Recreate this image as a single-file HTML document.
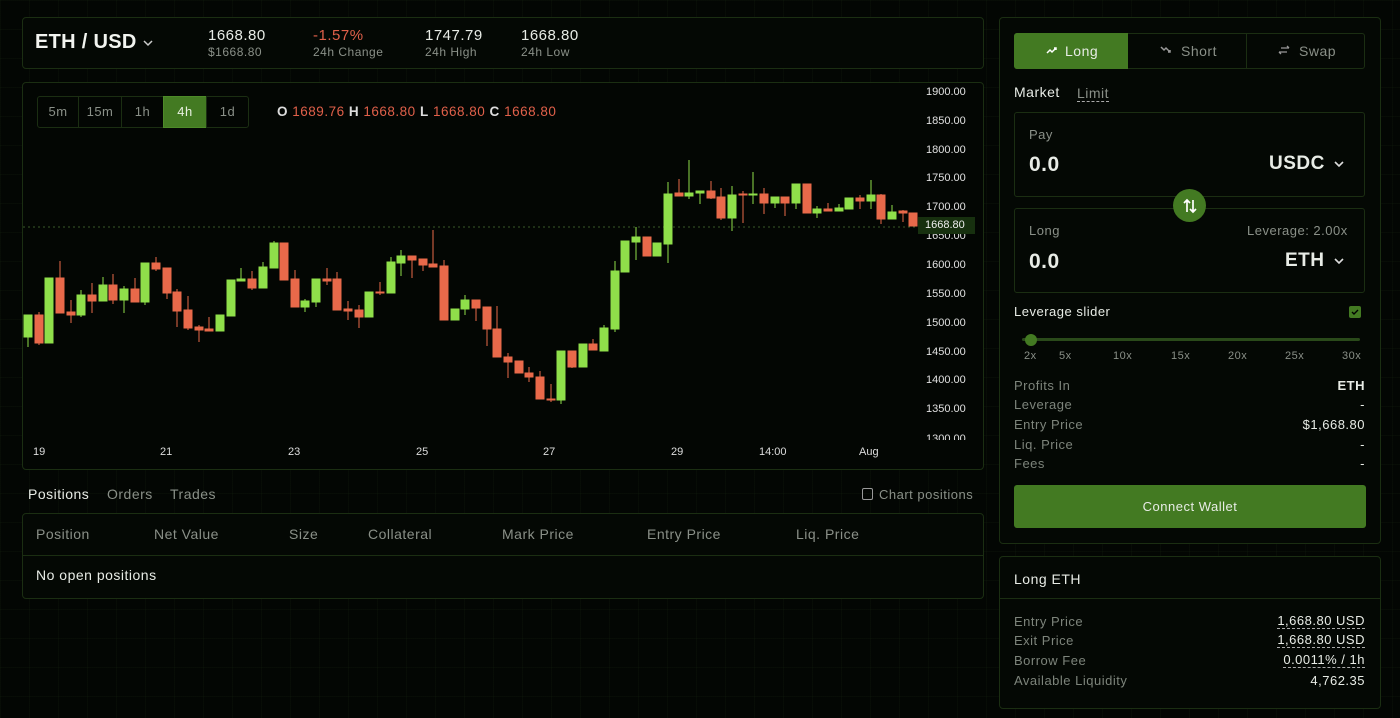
<!DOCTYPE html>
<html><head><meta charset="utf-8"><style>
*{box-sizing:border-box;margin:0;padding:0}
body{width:1400px;height:718px;overflow:hidden;position:relative;font-family:"Liberation Sans",sans-serif;color:#e8ece6;letter-spacing:.5px;
background-color:#030603;
background-image:linear-gradient(rgba(40,70,30,.11) 1px,transparent 1px),linear-gradient(90deg,rgba(40,70,30,.11) 1px,transparent 1px);
background-size:29px 29px;}
.p{position:absolute;border:1px solid #1b2e12;border-radius:4px;background:#040804}
.a{position:absolute;white-space:nowrap}
.g{color:#8a9088}
.r{color:#e0604a}
.tf{position:absolute;top:96px;height:32px;border:1px solid #1b2e12;color:#8a9088;font-size:13px;line-height:30px;text-align:center}
.row{position:absolute;left:1014px;width:351px;font-size:13px;display:flex;justify-content:space-between;color:#7d847b}
.row b{font-weight:normal;color:#e8ece6}
.u{border-bottom:1px dashed #aaa;line-height:14px}
</style></head><body>

<div class="p" style="left:22px;top:17px;width:962px;height:52px"></div>
<div class="a" style="left:35px;top:31px;font-size:20px;font-weight:bold;color:#f2f4f0;letter-spacing:.3px">ETH / USD</div>
<svg class="a" style="left:142px;top:38px" width="12" height="10"><path d="M2 3l4 4 4-4" stroke="#ccc" stroke-width="1.5" fill="none"/></svg>
<div class="a" style="left:208px;top:27px;font-size:15px">1668.80</div>
<div class="a g" style="left:208px;top:45px;font-size:12px">$1668.80</div>
<div class="a r" style="left:313px;top:27px;font-size:15px">-1.57%</div>
<div class="a g" style="left:313px;top:45px;font-size:12px">24h Change</div>
<div class="a" style="left:425px;top:27px;font-size:15px">1747.79</div>
<div class="a g" style="left:425px;top:45px;font-size:12px">24h High</div>
<div class="a" style="left:521px;top:27px;font-size:15px">1668.80</div>
<div class="a g" style="left:521px;top:45px;font-size:12px">24h Low</div>

<div class="p" style="left:22px;top:82px;width:962px;height:388px;background:#030603"></div>
<div class="tf" style="left:37px;width:42px;border-radius:3px 0 0 3px">5m</div>
<div class="tf" style="left:78px;width:44px">15m</div>
<div class="tf" style="left:121px;width:43px">1h</div>
<div class="tf" style="left:163px;width:44px;background:#437a22;color:#e8f0e0;border-color:#4d8a28">4h</div>
<div class="tf" style="left:206px;width:43px;border-radius:0 3px 3px 0">1d</div>
<div class="a" style="left:277px;top:104px;font-size:13.5px"><span style="color:#ddd;font-weight:bold">O</span> <span class="r">1689.76</span> <span style="color:#ddd;font-weight:bold">H</span> <span class="r">1668.80</span> <span style="color:#ddd;font-weight:bold">L</span> <span class="r">1668.80</span> <span style="color:#ddd;font-weight:bold">C</span> <span class="r">1668.80</span></div>

<div class="a" style="left:926px;top:84px;width:50px;height:356px;overflow:hidden;font-size:11px;color:#e0e0e0;letter-spacing:0">
<div style="position:absolute;top:2px">1900.00</div><div style="position:absolute;top:31px">1850.00</div><div style="position:absolute;top:60px">1800.00</div><div style="position:absolute;top:88px">1750.00</div><div style="position:absolute;top:117px">1700.00</div><div style="position:absolute;top:146px">1650.00</div><div style="position:absolute;top:175px">1600.00</div><div style="position:absolute;top:204px">1550.00</div><div style="position:absolute;top:233px">1500.00</div><div style="position:absolute;top:262px">1450.00</div><div style="position:absolute;top:290px">1400.00</div><div style="position:absolute;top:319px">1350.00</div><div style="position:absolute;top:349px">1300.00</div>
</div>
<div class="a" style="left:918px;top:217px;width:57px;height:17px;background:#17300f;font-size:11px;line-height:17px;color:#eee;padding-left:7px;letter-spacing:0">1668.80</div>
<div class="a" style="left:0;top:446px;font-size:11px;color:#ddd;width:1000px;height:14px;letter-spacing:0">
<span class="a" style="left:33px">19</span><span class="a" style="left:160px">21</span><span class="a" style="left:288px">23</span><span class="a" style="left:416px">25</span><span class="a" style="left:543px">27</span><span class="a" style="left:671px">29</span><span class="a" style="left:759px">14:00</span><span class="a" style="left:859px">Aug</span></div>

<svg class="a" style="left:0;top:0" width="1000" height="470">
<line x1="23" y1="227" x2="918" y2="227" stroke="#3a5a2a" stroke-dasharray="2 3"/>
</svg>

<div class="a" style="left:28px;top:486px;font-size:14px;color:#e8ece6">Positions</div>
<div class="a g" style="left:107px;top:486px;font-size:14px">Orders</div>
<div class="a g" style="left:170px;top:486px;font-size:14px">Trades</div>
<div class="a" style="left:862px;top:488px;width:11px;height:12px;border:1px solid #999;border-radius:2px"></div>
<div class="a g" style="left:879px;top:487px;font-size:13px">Chart positions</div>
<div class="p" style="left:22px;top:513px;width:962px;height:86px"></div>
<div class="a" style="left:22px;top:555px;width:962px;height:1px;background:#1b2e12"></div>
<div class="a g" style="left:36px;top:526px;font-size:14px;width:900px;height:18px">
<span class="a" style="left:0">Position</span><span class="a" style="left:118px">Net Value</span><span class="a" style="left:253px">Size</span><span class="a" style="left:332px">Collateral</span><span class="a" style="left:466px">Mark Price</span><span class="a" style="left:611px">Entry Price</span><span class="a" style="left:760px">Liq. Price</span></div>
<div class="a" style="left:36px;top:567px;font-size:14px">No open positions</div>

<div class="p" style="left:999px;top:17px;width:382px;height:527px"></div>
<div class="a" style="left:1014px;top:33px;width:351px;height:36px;border:1px solid #1b2e12;border-radius:3px"></div>
<div class="a" style="left:1014px;top:33px;width:114px;height:36px;background:#437a22;border-radius:3px 0 0 3px"></div>
<div class="a" style="left:1246px;top:33px;width:1px;height:36px;background:#1b2e12"></div>
<svg class="a" style="left:1046px;top:45px" width="12" height="10"><path d="M1 8l3-3 2 2 4-4M8 3h2v2" stroke="#fff" stroke-width="1.5" fill="none"/></svg>
<div class="a" style="left:1065px;top:43px;font-size:14px">Long</div>
<svg class="a" style="left:1160px;top:45px" width="12" height="10"><path d="M1 2l3 3 2-2 4 4M8 7h2v-2" stroke="#999" stroke-width="1.5" fill="none"/></svg>
<div class="a g" style="left:1181px;top:43px;font-size:14px">Short</div>
<svg class="a" style="left:1278px;top:45px" width="12" height="10"><path d="M3 3h8M9 1l2 2M9 7H1M3 9L1 7" stroke="#999" stroke-width="1.3" fill="none"/></svg>
<div class="a g" style="left:1299px;top:43px;font-size:14px">Swap</div>

<div class="a" style="left:1014px;top:84px;font-size:14px">Market</div>
<div class="a g u" style="left:1077px;top:85px;font-size:14px;line-height:16px">Limit</div>

<div class="a" style="left:1014px;top:112px;width:351px;height:85px;border:1px solid #1b2e12;border-radius:3px"></div>
<div class="a g" style="left:1029px;top:127px;font-size:13px">Pay</div>
<div class="a" style="left:1029px;top:153px;font-size:21px;font-weight:bold">0.0</div>
<div class="a" style="left:1269px;top:153px;font-size:19px;font-weight:bold">USDC</div>
<svg class="a" style="left:1333px;top:159px" width="12" height="10"><path d="M2 3l4 4 4-4" stroke="#ddd" stroke-width="1.6" fill="none"/></svg>

<div class="a" style="left:1014px;top:208px;width:351px;height:85px;border:1px solid #1b2e12;border-radius:3px"></div>
<div class="a g" style="left:1029px;top:223px;font-size:13px">Long</div>
<div class="a g" style="left:1247px;top:223px;font-size:13px">Leverage: 2.00x</div>
<div class="a" style="left:1029px;top:250px;font-size:21px;font-weight:bold">0.0</div>
<div class="a" style="left:1285px;top:250px;font-size:19px;font-weight:bold">ETH</div>
<svg class="a" style="left:1333px;top:256px" width="12" height="10"><path d="M2 3l4 4 4-4" stroke="#ddd" stroke-width="1.6" fill="none"/></svg>

<div class="a" style="left:1173px;top:189px;width:33px;height:33px;border-radius:50%;background:#437a22"></div>
<svg class="a" style="left:1181px;top:197px" width="18" height="18"><path d="M6 15V3M3 6l3-3 3 3M12 3v12M9 12l3 3 3-3" stroke="#fff" stroke-width="1.7" fill="none"/></svg>

<div class="a" style="left:1014px;top:304px;font-size:13px">Leverage slider</div>
<div class="a" style="left:1349px;top:306px;width:12px;height:12px;background:#437a22;border-radius:2px"></div>
<svg class="a" style="left:1349px;top:306px" width="12" height="12"><path d="M3 6l2 2 4-4" stroke="#000" stroke-width="1.4" fill="none"/></svg>
<div class="a" style="left:1022px;top:338px;width:338px;height:3px;background:#2a4a1a;border-radius:2px"></div>
<div class="a" style="left:1025px;top:334px;width:12px;height:12px;border-radius:50%;background:#437a22"></div>
<div class="a g" style="left:1014px;top:350px;font-size:11px;width:360px;height:14px">
<span class="a" style="left:10px">2x</span><span class="a" style="left:45px">5x</span><span class="a" style="left:99px">10x</span><span class="a" style="left:157px">15x</span><span class="a" style="left:214px">20x</span><span class="a" style="left:271px">25x</span><span class="a" style="left:328px">30x</span></div>

<div class="row" style="top:378px"><span>Profits In</span><b style="font-weight:bold">ETH</b></div>
<div class="row" style="top:397px"><span>Leverage</span><b>-</b></div>
<div class="row" style="top:417px"><span>Entry Price</span><b>$1,668.80</b></div>
<div class="row" style="top:437px"><span>Liq. Price</span><b>-</b></div>
<div class="row" style="top:456px"><span>Fees</span><b>-</b></div>
<div class="a" style="left:1014px;top:485px;width:352px;height:43px;background:#437a22;border-radius:3px;font-size:13px;text-align:center;line-height:43px">Connect Wallet</div>

<div class="p" style="left:999px;top:556px;width:382px;height:153px"></div>
<div class="a" style="left:999px;top:598px;width:382px;height:1px;background:#1b2e12"></div>
<div class="a" style="left:1014px;top:571px;font-size:14px">Long ETH</div>
<div class="row" style="top:614px"><span>Entry Price</span><b class="u">1,668.80 USD</b></div>
<div class="row" style="top:633px"><span>Exit Price</span><b class="u">1,668.80 USD</b></div>
<div class="row" style="top:653px"><span>Borrow Fee</span><b class="u">0.0011% / 1h</b></div>
<div class="row" style="top:673px"><span>Available Liquidity</span><b>4,762.35</b></div>

<svg class="a" style="left:0;top:0" width="1000" height="470">
<g stroke-width="1">
<g fill="#8fdf4a" stroke="#8fdf4a">
<line x1="28" y1="315" x2="28" y2="347"/><rect x="24" y="315" width="8" height="22"/>
<line x1="49" y1="278" x2="49" y2="343"/><rect x="45" y="278" width="8" height="65"/>
<line x1="81" y1="290" x2="81" y2="317"/><rect x="77" y="295" width="8" height="20"/>
<line x1="103" y1="277" x2="103" y2="301"/><rect x="99" y="285" width="8" height="16"/>
<line x1="124" y1="286" x2="124" y2="313"/><rect x="120" y="289" width="8" height="11"/>
<line x1="145" y1="263" x2="145" y2="305"/><rect x="141" y="263" width="8" height="39"/>
<rect x="216" y="315" width="8" height="16"/>
<rect x="227" y="280" width="8" height="36"/>
<line x1="241" y1="268" x2="241" y2="281"/><rect x="237" y="279" width="8" height="2"/>
<line x1="263" y1="262" x2="263" y2="288"/><rect x="259" y="267" width="8" height="21"/>
<line x1="274" y1="241" x2="274" y2="268"/><rect x="270" y="243" width="8" height="25"/>
<line x1="305" y1="299" x2="305" y2="312"/><rect x="301" y="301" width="8" height="6"/>
<line x1="316" y1="279" x2="316" y2="307"/><rect x="312" y="279" width="8" height="23"/>
<rect x="365" y="292" width="8" height="25"/>
<line x1="391" y1="257" x2="391" y2="293"/><rect x="387" y="262" width="8" height="31"/>
<line x1="401" y1="250" x2="401" y2="276"/><rect x="397" y="256" width="8" height="7"/>
<rect x="451" y="309" width="8" height="11"/>
<line x1="465" y1="295" x2="465" y2="315"/><rect x="461" y="300" width="8" height="9"/>
<line x1="561" y1="351" x2="561" y2="404"/><rect x="557" y="351" width="8" height="49"/>
<rect x="579" y="344" width="8" height="23"/>
<line x1="604" y1="325" x2="604" y2="351"/><rect x="600" y="328" width="8" height="23"/>
<line x1="615" y1="261" x2="615" y2="332"/><rect x="611" y="271" width="8" height="58"/>
<rect x="621" y="241" width="8" height="31"/>
<line x1="636" y1="227" x2="636" y2="260"/><rect x="632" y="237" width="8" height="5"/>
<rect x="653" y="243" width="8" height="13"/>
<line x1="668" y1="182" x2="668" y2="263"/><rect x="664" y="194" width="8" height="50"/>
<line x1="689" y1="160" x2="689" y2="199"/><rect x="685" y="193" width="8" height="3"/>
<line x1="700" y1="191" x2="700" y2="204"/><rect x="696" y="191" width="8" height="2"/>
<line x1="732" y1="186" x2="732" y2="231"/><rect x="728" y="195" width="8" height="23"/>
<line x1="753" y1="172" x2="753" y2="204"/><rect x="749" y="194" width="8" height="1"/>
<line x1="775" y1="197" x2="775" y2="208"/><rect x="771" y="197" width="8" height="6"/>
<line x1="796" y1="184" x2="796" y2="209"/><rect x="792" y="184" width="8" height="19"/>
<line x1="817" y1="206" x2="817" y2="218"/><rect x="813" y="209" width="8" height="4"/>
<line x1="839" y1="204" x2="839" y2="211"/><rect x="835" y="208" width="8" height="3"/>
<rect x="845" y="198" width="8" height="11"/>
<line x1="871" y1="180" x2="871" y2="209"/><rect x="867" y="195" width="8" height="6"/>
<line x1="892" y1="205" x2="892" y2="219"/><rect x="888" y="212" width="8" height="7"/>
</g>
<g fill="#e8694a" stroke="#e8694a">
<line x1="39" y1="312" x2="39" y2="345"/><rect x="35" y="315" width="8" height="28"/>
<line x1="60" y1="261" x2="60" y2="313"/><rect x="56" y="278" width="8" height="35"/>
<line x1="71" y1="300" x2="71" y2="323"/><rect x="67" y="312" width="8" height="3"/>
<line x1="92" y1="283" x2="92" y2="313"/><rect x="88" y="295" width="8" height="6"/>
<line x1="113" y1="274" x2="113" y2="304"/><rect x="109" y="285" width="8" height="15"/>
<line x1="135" y1="278" x2="135" y2="302"/><rect x="131" y="289" width="8" height="13"/>
<line x1="156" y1="257" x2="156" y2="271"/><rect x="152" y="263" width="8" height="6"/>
<line x1="167" y1="268" x2="167" y2="299"/><rect x="163" y="268" width="8" height="25"/>
<line x1="177" y1="289" x2="177" y2="327"/><rect x="173" y="292" width="8" height="19"/>
<line x1="188" y1="296" x2="188" y2="330"/><rect x="184" y="310" width="8" height="18"/>
<line x1="199" y1="325" x2="199" y2="342"/><rect x="195" y="327" width="8" height="3"/>
<line x1="209" y1="317" x2="209" y2="331"/><rect x="205" y="329" width="8" height="2"/>
<line x1="252" y1="271" x2="252" y2="290"/><rect x="248" y="279" width="8" height="9"/>
<rect x="280" y="243" width="8" height="37"/>
<line x1="295" y1="270" x2="295" y2="307"/><rect x="291" y="279" width="8" height="28"/>
<line x1="327" y1="268" x2="327" y2="285"/><rect x="323" y="279" width="8" height="2"/>
<line x1="337" y1="272" x2="337" y2="310"/><rect x="333" y="279" width="8" height="31"/>
<line x1="348" y1="301" x2="348" y2="320"/><rect x="344" y="309" width="8" height="2"/>
<line x1="359" y1="305" x2="359" y2="328"/><rect x="355" y="310" width="8" height="7"/>
<line x1="380" y1="282" x2="380" y2="295"/><rect x="376" y="292" width="8" height="1"/>
<line x1="412" y1="256" x2="412" y2="278"/><rect x="408" y="256" width="8" height="4"/>
<line x1="423" y1="259" x2="423" y2="271"/><rect x="419" y="259" width="8" height="6"/>
<line x1="433" y1="230" x2="433" y2="267"/><rect x="429" y="264" width="8" height="3"/>
<line x1="444" y1="260" x2="444" y2="320"/><rect x="440" y="266" width="8" height="54"/>
<line x1="476" y1="300" x2="476" y2="321"/><rect x="472" y="300" width="8" height="8"/>
<line x1="487" y1="307" x2="487" y2="346"/><rect x="483" y="307" width="8" height="22"/>
<line x1="497" y1="306" x2="497" y2="357"/><rect x="493" y="329" width="8" height="28"/>
<line x1="508" y1="353" x2="508" y2="378"/><rect x="504" y="357" width="8" height="5"/>
<rect x="515" y="361" width="8" height="12"/>
<line x1="529" y1="367" x2="529" y2="382"/><rect x="525" y="373" width="8" height="4"/>
<line x1="540" y1="371" x2="540" y2="399"/><rect x="536" y="377" width="8" height="22"/>
<line x1="551" y1="384" x2="551" y2="402"/><rect x="547" y="399" width="8" height="1"/>
<line x1="572" y1="351" x2="572" y2="368"/><rect x="568" y="351" width="8" height="16"/>
<line x1="593" y1="339" x2="593" y2="350"/><rect x="589" y="344" width="8" height="6"/>
<rect x="643" y="237" width="8" height="19"/>
<line x1="679" y1="179" x2="679" y2="196"/><rect x="675" y="193" width="8" height="3"/>
<line x1="711" y1="181" x2="711" y2="199"/><rect x="707" y="191" width="8" height="7"/>
<line x1="721" y1="188" x2="721" y2="220"/><rect x="717" y="197" width="8" height="21"/>
<line x1="743" y1="191" x2="743" y2="223"/><rect x="739" y="194" width="8" height="1"/>
<line x1="764" y1="188" x2="764" y2="214"/><rect x="760" y="194" width="8" height="9"/>
<line x1="785" y1="197" x2="785" y2="216"/><rect x="781" y="197" width="8" height="6"/>
<rect x="803" y="184" width="8" height="29"/>
<line x1="828" y1="203" x2="828" y2="211"/><rect x="824" y="209" width="8" height="2"/>
<line x1="860" y1="195" x2="860" y2="209"/><rect x="856" y="198" width="8" height="3"/>
<line x1="881" y1="194" x2="881" y2="224"/><rect x="877" y="195" width="8" height="24"/>
<line x1="903" y1="210" x2="903" y2="222"/><rect x="899" y="211" width="8" height="2"/>
<rect x="909" y="213" width="8" height="13"/>
</g>
</g>
</svg>
</body></html>
